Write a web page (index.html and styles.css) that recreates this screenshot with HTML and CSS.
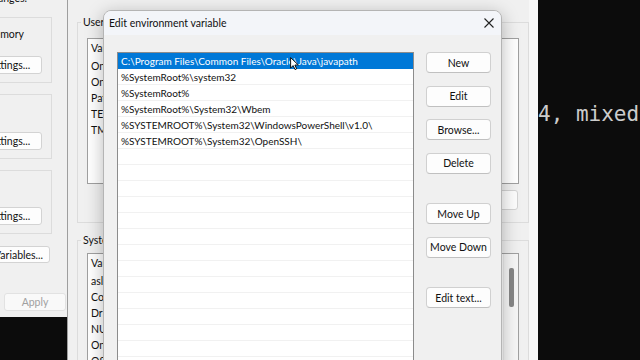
FILE: index.html
```html
<!DOCTYPE html>
<html lang="en">
<head>
    <meta charset="UTF-8">
    <meta name="viewport" content="width=device-width, initial-scale=1.0">
    <title>Edit environment variable</title>
    <link rel="stylesheet" href="styles.css">
</head>
<body>
    <div class="desktop">
        <!-- Terminal behind the windows -->
        <div class="terminal">
            <div class="terminal-line">4, mixed mode, sharing)</div>
        </div>

        <!-- System Properties (Advanced tab) -->
        <div class="sys-window">
            <p class="sys-note">You must be logged on as an Administrator to make most of these changes.</p>
            <div class="group">
                <span class="group-text">Visual effects, processor scheduling, memory usage, and virtual memory</span>
                <button class="win-btn settings-btn">Settings...</button>
            </div>
            <div class="group">
                <button class="win-btn settings-btn">Settings...</button>
            </div>
            <div class="group group-last">
                <button class="win-btn settings-btn">Settings...</button>
            </div>
            <button class="win-btn env-btn">Environment Variables...</button>
            <div class="sys-footer">
                <button class="win-btn apply-btn" disabled>Apply</button>
            </div>
        </div>

        <!-- Environment Variables -->
        <div class="env-window">
            <fieldset class="env-group">
                <legend>User variables for user</legend>
                <div class="var-list user-list">
                    <div class="var-table">
                        <div class="var-row var-head"><span>Variable</span><span>Value</span></div>
                        <div class="var-row"><span>OneDrive</span><span>C:\Users\user\OneDrive</span></div>
                        <div class="var-row"><span>OneDriveConsumer</span><span>C:\Users\user\OneDrive</span></div>
                        <div class="var-row"><span>Path</span><span>C:\Users\user\AppData\Local\Microsoft\...</span></div>
                        <div class="var-row"><span>TEMP</span><span>C:\Users\user\AppData\Local\Temp</span></div>
                        <div class="var-row"><span>TMP</span><span>C:\Users\user\AppData\Local\Temp</span></div>
                    </div>
                </div>
                <div class="group-buttons">
                    <button class="win-btn">New...</button>
                    <button class="win-btn">Edit...</button>
                    <button class="win-btn">Delete</button>
                </div>
            </fieldset>
            <fieldset class="env-group system-group">
                <legend>System variables</legend>
                <div class="var-list system-list">
                    <div class="var-table">
                        <div class="var-row var-head"><span>Variable</span><span>Value</span></div>
                        <div class="var-row"><span>asl.log</span><span>Destination=file</span></div>
                        <div class="var-row"><span>ComSpec</span><span>C:\Windows\system32\cmd.exe</span></div>
                        <div class="var-row"><span>DriverData</span><span>C:\Windows\System32\Drivers\DriverData</span></div>
                        <div class="var-row"><span>NUMBER_OF_PROCESSORS</span><span>8</span></div>
                        <div class="var-row"><span>OnlineServices</span><span>Online Services</span></div>
                        <div class="var-row"><span>OS</span><span>Windows_NT</span></div>
                    </div>
                    <div class="scrollbar"><div class="scroll-thumb"></div></div>
                </div>
            </fieldset>
        </div>

        <!-- Edit environment variable dialog -->
        <div class="edit-dialog">
            <div class="dialog-title">
                <span>Edit environment variable</span>
                <svg class="close-icon" width="10" height="10" viewBox="0 0 10 10">
                    <path d="M0.5 0.5 L9.5 9.5 M9.5 0.5 L0.5 9.5" stroke="#222" stroke-width="1.1" fill="none"/>
                </svg>
            </div>
            <div class="dialog-body">
                <div class="path-list">
                    <div class="path-row selected">C:\Program Files\Common Files\Oracle\Java\javapath</div>
                    <div class="path-row">%SystemRoot%\system32</div>
                    <div class="path-row">%SystemRoot%</div>
                    <div class="path-row">%SystemRoot%\System32\Wbem</div>
                    <div class="path-row">%SYSTEMROOT%\System32\WindowsPowerShell\v1.0\</div>
                    <div class="path-row">%SYSTEMROOT%\System32\OpenSSH\</div>
                </div>
                <div class="dialog-buttons">
                    <button class="dlg-btn">New</button>
                    <button class="dlg-btn">Edit</button>
                    <button class="dlg-btn">Browse...</button>
                    <button class="dlg-btn">Delete</button>
                    <button class="dlg-btn btn-gap">Move Up</button>
                    <button class="dlg-btn">Move Down</button>
                    <button class="dlg-btn btn-gap">Edit text...</button>
                </div>
            </div>
        </div>

        <!-- Mouse pointer -->
        <svg class="pointer" width="10" height="14" viewBox="0 0 10 14">
            <path d="M0.6 0.6 L0.6 11 L3.2 8.6 L5 12.6 L6.6 11.9 L4.9 8 L8.3 8 Z" fill="#fff" stroke="#000" stroke-width="0.9" stroke-linejoin="round"/>
        </svg>
    </div>
</body>
</html>
```

FILE: styles.css
```css
* {
    box-sizing: border-box;
}

body {
    margin: 0;
    background-color: #0c0c0c;
    font-family: Lato, 'Noto Sans', 'Liberation Sans', sans-serif;
    font-size: 10.5px;
    color: #111;
}

.desktop {
    position: relative;
    width: 640px;
    height: 360px;
    overflow: hidden;
}

button {
    font-family: inherit;
    font-size: 10.5px;
    color: #111;
    padding: 0;
    white-space: nowrap;
}

/* Terminal */
.terminal {
    position: absolute;
    inset: 0;
    background-color: #0c0c0c;
}

.terminal-line {
    position: absolute;
    left: 538px;
    top: 102px;
    font-family: 'DejaVu Sans Mono', monospace;
    font-size: 21px;
    color: #cccccc;
    white-space: nowrap;
}

/* System Properties window */
.sys-window {
    position: absolute;
    left: 0;
    top: 0;
    width: 68px;
    height: 317px;
    background-color: #f0f0f0;
    border-right: 1px solid #a8a8a8;
    overflow: hidden;
    display: flex;
    flex-direction: column;
}

.sys-note {
    margin: -10px 40px 0 -600px;
    line-height: 16px;
    text-align: right;
    white-space: nowrap;
}

.group {
    height: 66px;
    margin: 11px 15px 0 -80px;
    padding: 8px 9px 8px 0;
    border: 1px solid #dcdcdc;
    display: flex;
    flex-direction: column;
    justify-content: flex-end;
    align-items: flex-end;
}

.group + .group {
    height: 65px;
}

.group-last {
    height: 64px !important;
}

.group-text {
    margin: 0 18px auto 0;
    line-height: 16px;
    white-space: nowrap;
}

.win-btn {
    width: 75px;
    height: 18px;
    background-color: #fdfdfd;
    border: 1px solid #d3d3d3;
    border-radius: 3px;
    line-height: 16px;
    flex-shrink: 0;
}

.settings-btn {
    width: 68px;
}

.env-btn {
    width: 124px;
    height: 17px;
    margin: 12px 17px 0 -74px;
}

.sys-footer {
    margin-top: 30px;
    padding-left: 4px;
}

.apply-btn {
    width: 62px;
    height: 18px;
    color: #a0a0a0;
    background-color: #f9f9f9;
    border-color: #e2e2e2;
}

/* Environment Variables window */
.env-window {
    position: absolute;
    left: 67px;
    top: 0;
    width: 471px;
    height: 360px;
    background-color: #f0f0f0;
    border-left: 1px solid #9e9e9e;
    padding: 14px 9px 0 9px;
    box-shadow: inset -9px 0 0 #f7f7f7;
}

.env-group {
    margin: 0;
    padding: 0 9px 12px 9px;
    border: 1px solid #dcdcdc;
    min-width: 0;
}

.env-group legend {
    margin-left: -6px;
    padding: 0 2px;
    line-height: 16px;
}

.system-group {
    margin-top: 9px;
    padding-bottom: 0;
    height: 140px;
}

.var-list {
    background-color: #ffffff;
    border: 1px solid #a0a0a0;
    display: flex;
    overflow: hidden;
}

.user-list {
    margin-top: 8px;
    height: 146px;
}

.system-list {
    margin-top: 5px;
    height: 160px;
}

.var-table {
    flex: 1;
}

.var-row {
    display: grid;
    grid-template-columns: 150px 1fr;
    height: 16px;
    line-height: 16px;
    padding-left: 3px;
    white-space: nowrap;
}

.var-head {
    height: 19px;
    line-height: 19px;
}

.scrollbar {
    width: 15px;
    background-color: #f6f6f6;
    border-left: 1px solid #ececec;
    display: flex;
    justify-content: center;
}

.scroll-thumb {
    width: 5px;
    height: 39px;
    margin-top: 14px;
    border-radius: 2px;
    background-color: #878787;
}

.group-buttons {
    margin-top: 6px;
    display: flex;
    justify-content: flex-end;
    gap: 8px;
    padding-right: 1px;
}

.group-buttons .win-btn {
    height: 20px;
}

/* Edit environment variable dialog */
.edit-dialog {
    position: absolute;
    left: 103px;
    top: 10px;
    width: 399px;
    height: 370px;
    background-color: #f0f0f0;
    border: 1px solid #b4b4b4;
    border-radius: 8px 8px 0 0;
    box-shadow: 0 4px 18px rgba(0, 0, 0, 0.28);
    display: flex;
    flex-direction: column;
    overflow: hidden;
}

.dialog-title {
    height: 24px;
    padding: 0 7px 0 5px;
    background-color: #f3f5f9;
    display: flex;
    align-items: center;
    justify-content: space-between;
}

.close-icon {
    display: block;
}

.dialog-body {
    flex: 1;
    padding: 17px 10px 0 13px;
    display: flex;
    gap: 12px;
}

.path-list {
    width: 297px;
    border: 1px solid #8c8c8c;
    background: repeating-linear-gradient(#ffffff 0 15px, #f1f1f1 15px 16px);
    font-size: 10px;
}

.path-row {
    height: 16px;
    line-height: 16px;
    padding-left: 3px;
    white-space: nowrap;
}

.path-row.selected {
    background-color: #0078d7;
    color: #ffffff;
}

.dialog-buttons {
    width: 65px;
    display: flex;
    flex-direction: column;
    gap: 12.5px;
}

.dlg-btn {
    height: 21px;
    background-color: #fdfdfd;
    border: 1px solid #d0d0d0;
    border-bottom-color: #c0c0c0;
    border-radius: 4px;
}

.btn-gap {
    margin-top: 17px;
}

/* Mouse pointer */
.pointer {
    position: absolute;
    left: 290px;
    top: 57px;
}
```
